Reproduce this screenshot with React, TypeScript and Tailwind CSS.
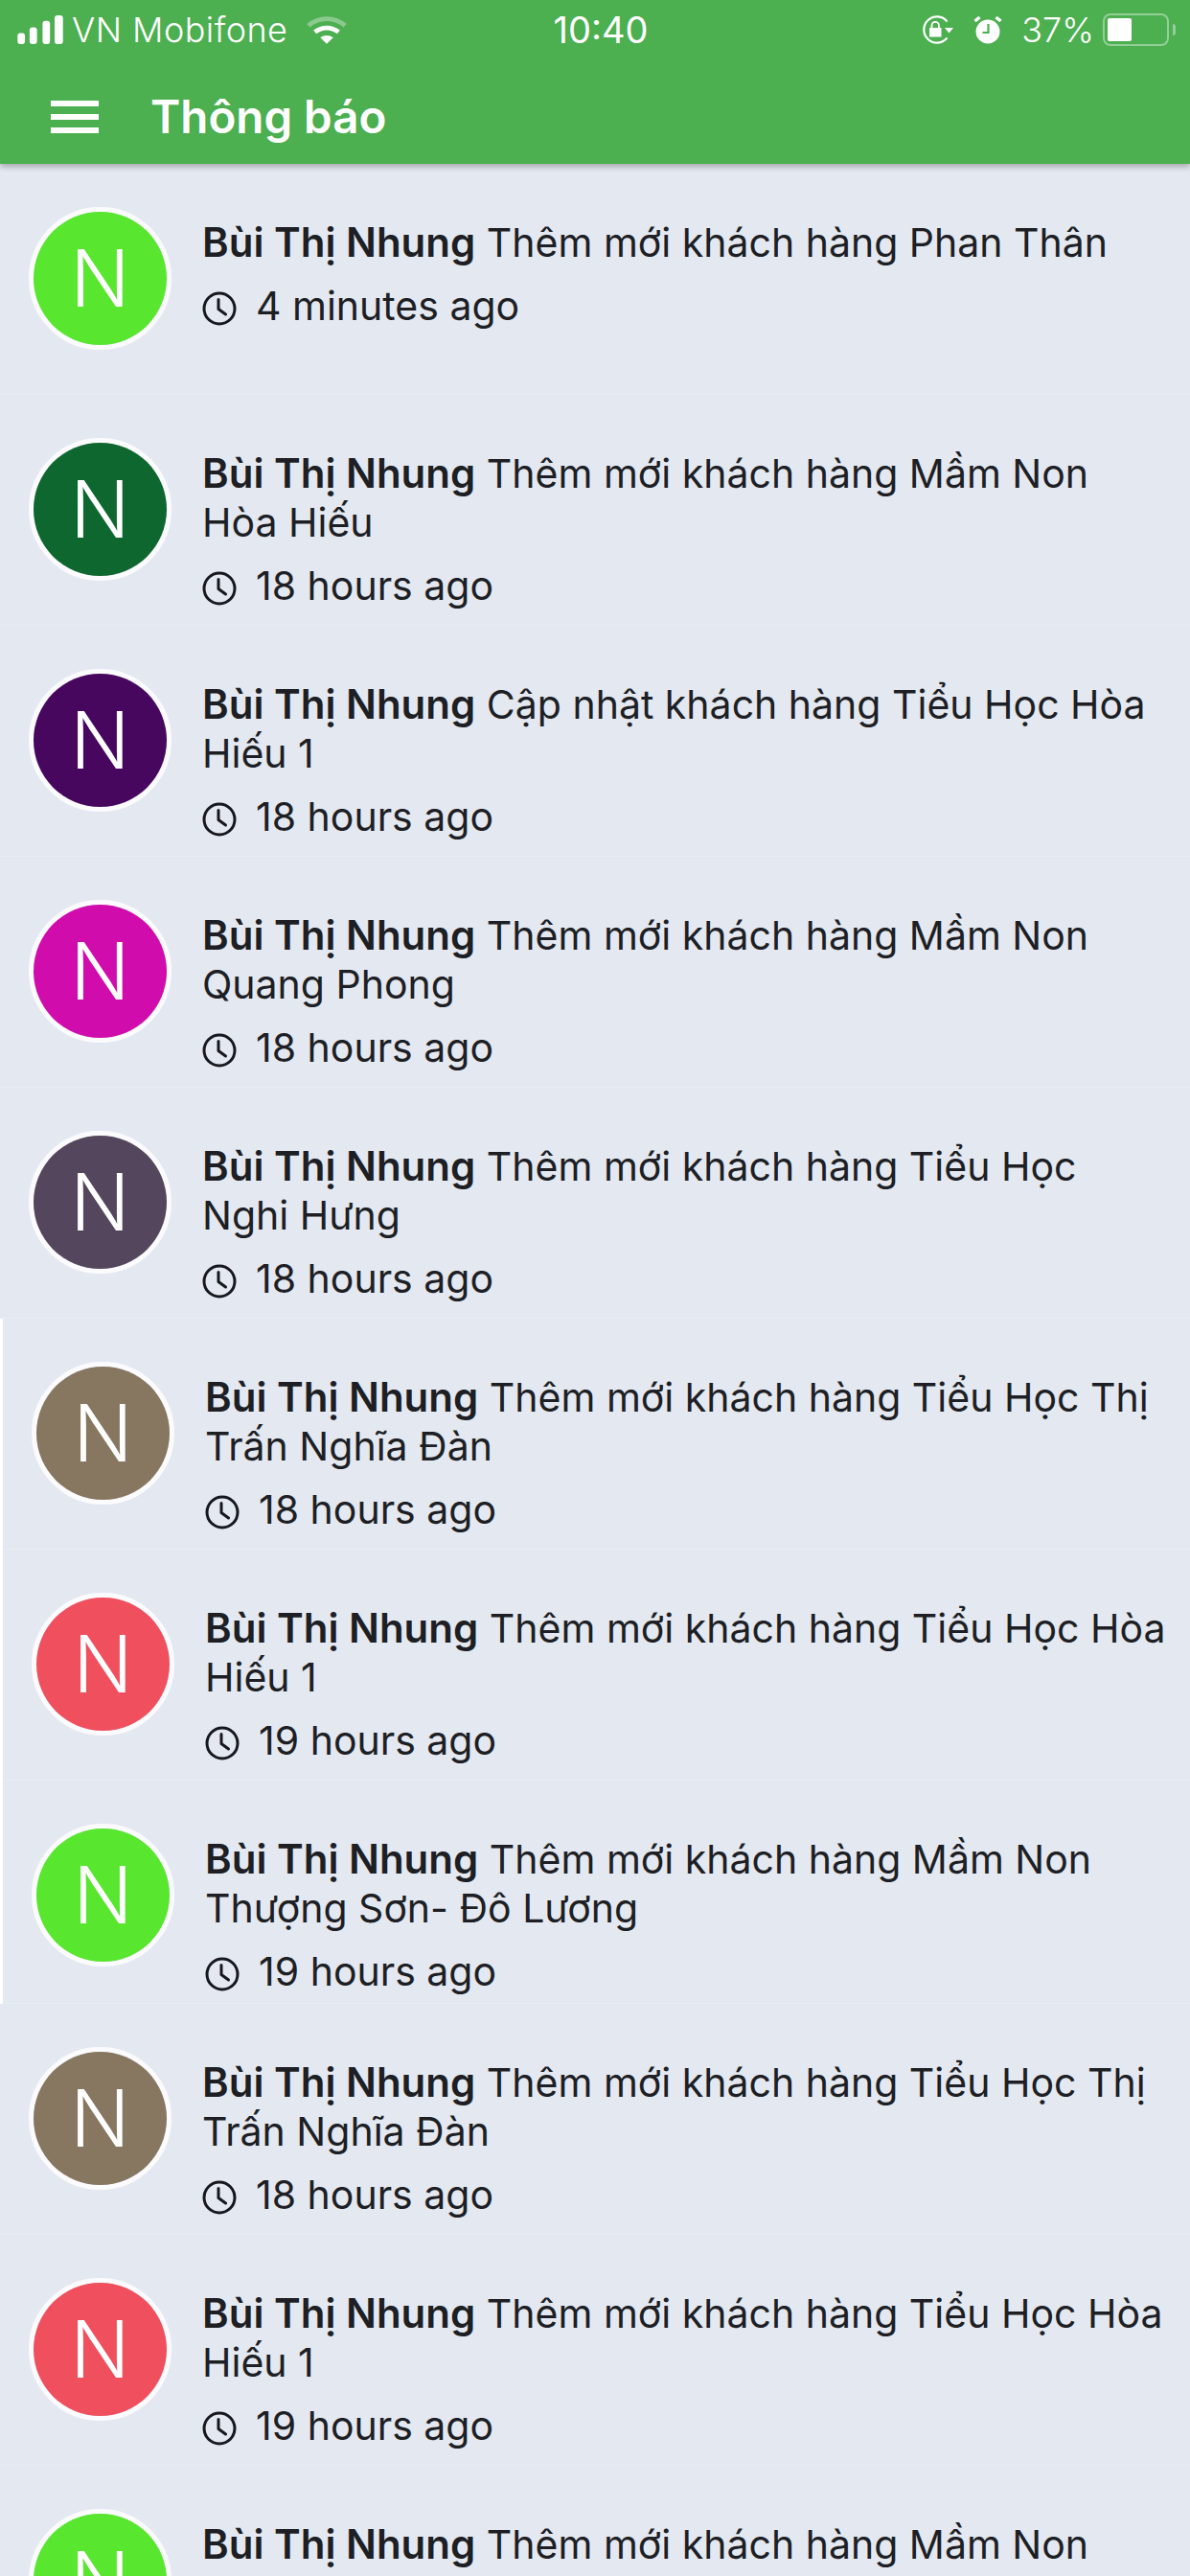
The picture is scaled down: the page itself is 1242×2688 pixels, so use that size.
const FONT = "font-['Inter','Noto_Sans',sans-serif]";

type Row = { color: string; text: string; time: string; h: string };

const first: Row[] = [
  { color: "bg-[#58e62e]", text: "Thêm mới khách hàng Phan Thân", time: "4 minutes ago", h: "h-[241px]" },
  { color: "bg-[#0e672e]", text: "Thêm mới khách hàng Mầm Non Hòa Hiếu", time: "18 hours ago", h: "h-[241px]" },
  { color: "bg-[#47075f]", text: "Cập nhật khách hàng Tiểu Học Hòa Hiếu 1", time: "18 hours ago", h: "h-[241px]" },
  { color: "bg-[#d10cac]", text: "Thêm mới khách hàng Mầm Non Quang Phong", time: "18 hours ago", h: "h-[241px]" },
  { color: "bg-[#54465c]", text: "Thêm mới khách hàng Tiểu Học Nghi Hưng", time: "18 hours ago", h: "h-[241px]" },
];
const shifted: Row[] = [
  { color: "bg-[#877660]", text: "Thêm mới khách hàng Tiểu Học Thị Trấn Nghĩa Đàn", time: "18 hours ago", h: "h-[241px]" },
  { color: "bg-[#f04f5d]", text: "Thêm mới khách hàng Tiểu Học Hòa Hiếu 1", time: "19 hours ago", h: "h-[241px]" },
  { color: "bg-[#58e62e]", text: "Thêm mới khách hàng Mầm Non Thượng Sơn- Đô Lương", time: "19 hours ago", h: "h-[233px]" },
];
const last: Row[] = [
  { color: "bg-[#877660]", text: "Thêm mới khách hàng Tiểu Học Thị Trấn Nghĩa Đàn", time: "18 hours ago", h: "h-[241px]" },
  { color: "bg-[#f04f5d]", text: "Thêm mới khách hàng Tiểu Học Hòa Hiếu 1", time: "19 hours ago", h: "h-[241px]" },
  { color: "bg-[#58e62e]", text: "Thêm mới khách hàng Mầm Non Thượng Sơn- Đô Lương", time: "19 hours ago", h: "h-[241px]" },
];

function Clock() {
  return (
    <svg viewBox="0 0 36 36" className="w-[36px] h-[36px] shrink-0 mt-[9px]" fill="none" stroke="#16181d" strokeWidth="3">
      <circle cx="18" cy="18" r="16" />
      <path d="M17 8.5V18.5l7.5 5.5" strokeLinecap="round" strokeLinejoin="round" />
    </svg>
  );
}

function Item({ r }: { r: Row }) {
  return (
    <div className={`${r.h} pt-[45px] flex border-b border-[#e8ecf3] overflow-hidden bg-[#e4e8f1]`}>
      <div className="ml-[30px] w-[149px] h-[149px] shrink-0 rounded-full border-[5px] border-[#fbfbfd]">
        <div className={`w-full h-full rounded-full ${r.color} flex items-center justify-center text-white text-[82px] font-light leading-none`}>N</div>
      </div>
      <div className="ml-[32px] pr-[24px] pt-[11px] flex-1 text-[#1d1f24] text-[41px]">
        <div className="leading-[51px]">
          <span className="font-semibold text-[42px]">Bùi Thị Nhung</span> {r.text}
        </div>
        <div className="flex gap-[20px] mt-[16px] leading-[48px]">
          <Clock />
          <span>{r.time}</span>
        </div>
      </div>
    </div>
  );
}

function StatusBar() {
  return (
    <div className="h-[60px] pt-[2px] flex items-center pl-[18px] pr-[15px] text-white font-light">
      <div className="flex-1 flex items-center gap-[8px] text-[36px] tracking-[0.45px]">
        <svg viewBox="0 0 50 31" className="w-[49px] h-[30px]" fill="#fff">
          <rect x="0" y="19" width="8" height="12" rx="3" />
          <rect x="13" y="13" width="8" height="18" rx="3" />
          <rect x="27" y="6" width="8" height="25" rx="3" />
          <rect x="40" y="0" width="9" height="31" rx="3" />
        </svg>
        <span>VN Mobifone</span>
        <svg viewBox="0 0 44 32" className="w-[42px] h-[31px] ml-[12px]" fill="none" stroke="#fff">
          <path d="M2 11C13 1 31 1 42 11" strokeWidth="5" strokeOpacity="0.35" />
          <path d="M9 18c8-6 18-6 26 0" strokeWidth="5" />
          <path d="M22 31l-7-7c4-3 10-3 14 0z" fill="#fff" stroke="none" />
        </svg>
      </div>
      <span className="ml-[9px] text-[38px] font-normal">10:40</span>
      <div className="flex-1 flex items-center justify-end text-[36px]">
        <svg viewBox="0 0 34 30" className="w-[34px] h-[30px]" fill="none" stroke="#fff" strokeWidth="2.2">
          <path d="M27.5 23.5A13.6 13.6 0 1 1 27.5 6.5" />
          <path d="M25 13l4.5 5.5 4.5-5.5z" fill="#fff" stroke="none" />
          <rect x="9" y="13" width="12.5" height="9.5" fill="#fff" stroke="none" />
          <path d="M11.5 13v-2.5a3.7 3.7 0 0 1 7.4 0V13" strokeWidth="1.8" />
        </svg>
        <svg viewBox="0 0 30 30" className="w-[30px] h-[30px] ml-[21px]">
          <circle cx="15" cy="17" r="12.5" fill="#fff" />
          <path d="M15.5 9v9h-6" fill="none" stroke="#4caf50" strokeWidth="2.2" />
          <path d="M1.5 6l5-4M28.5 6l-5-4" stroke="#fff" strokeWidth="3.5" />
        </svg>
        <span className="ml-[20px]">37%</span>
        <div className="ml-[9px] flex items-center">
          <div className="w-[69px] h-[34px] rounded-[8px] border-2 border-white/40 p-[3px]">
            <div className="w-[25px] h-full bg-white rounded-[2px]" />
          </div>
          <div className="w-[3px] h-[12px] ml-[4px] bg-white/40 rounded-r-full" />
        </div>
      </div>
    </div>
  );
}

export default function App() {
  return (
    <div className={`w-[1242px] h-[2688px] overflow-hidden bg-[#e4e8f1] ${FONT}`}>
      <div className="relative z-10 h-[171px] bg-[#4caf50] shadow-[0_3px_6px_rgba(0,0,0,0.28)]">
        <StatusBar />
        <div className="flex items-center h-[111px] pt-[12px]">
          <div className="ml-[53px] w-[50px] flex flex-col gap-[8px]">
            <div className="h-[6px] bg-white" />
            <div className="h-[6px] bg-white" />
            <div className="h-[6px] bg-white" />
          </div>
          <div className="ml-[54px] text-white text-[47.5px] font-semibold">Thông báo</div>
        </div>
      </div>
      {first.map((r, i) => <Item key={i} r={r} />)}
      <div className="pl-[3px] bg-white">
        {shifted.map((r, i) => <Item key={i} r={r} />)}
      </div>
      {last.map((r, i) => <Item key={i} r={r} />)}
    </div>
  );
}
